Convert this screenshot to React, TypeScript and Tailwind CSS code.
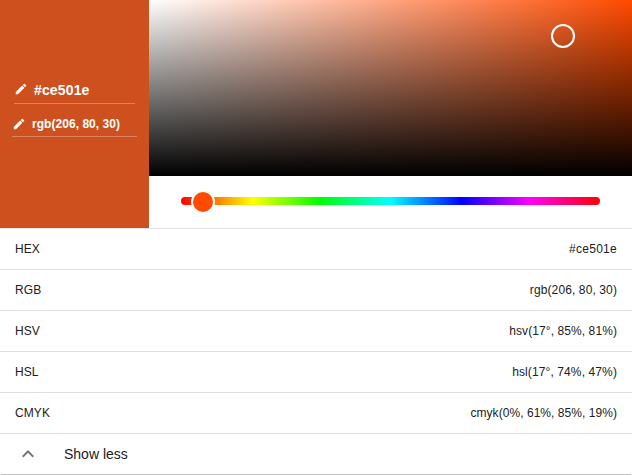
import { MdEdit, MdKeyboardArrowUp } from "react-icons/md";

const formats = [
  { name: "HEX", value: "#ce501e", tracking: "tracking-[0.28px]" },
  { name: "RGB", value: "rgb(206, 80, 30)", tracking: "tracking-[0.11px]" },
  { name: "HSV", value: "hsv(17°, 85%, 81%)", tracking: "tracking-[0.09px]" },
  { name: "HSL", value: "hsl(17°, 74%, 47%)", tracking: "tracking-[0.11px]" },
  { name: "CMYK", value: "cmyk(0%, 61%, 85%, 19%)", tracking: "tracking-[0.05px]" },
];

function Preview() {
  return (
    <div className="flex w-[149px] shrink-0 flex-col bg-[#ce501e] pt-[77px] font-bold text-white">
      <div className="ml-[14px] flex h-[27px] w-[121px] items-center border-b border-white/30">
        <MdEdit className="mb-[2px] size-[14px] shrink-0" />
        <span className="ml-[6px] text-[14px] leading-[16px] tracking-[0.15px]">#ce501e</span>
      </div>
      <div className="mt-[8px] ml-[12px] flex h-[25px] w-[125px] items-center border-b border-white/30">
        <MdEdit className="size-[14px] shrink-0" />
        <span className="ml-[6px] text-[12px] leading-[14px] tracking-[0.04px] whitespace-nowrap">rgb(206, 80, 30)</span>
      </div>
    </div>
  );
}

function Saturation() {
  return (
    <div className="relative h-[176px] bg-[#ff4a00] bg-[linear-gradient(to_top,#000,transparent),linear-gradient(to_right,#fff,rgba(255,255,255,0))]">
      <div className="absolute top-[24px] left-[402px] size-[24px] rounded-full border-2 border-white" />
    </div>
  );
}

function HueSlider() {
  return (
    <div className="px-8 pt-[21px]">
      <div className="relative h-2 rounded-full bg-[linear-gradient(to_right,#f00_0%,#ff0_17%,#0f0_33%,#0ff_50%,#00f_67%,#f0f_83%,#f00_100%)]">
        <div className="absolute top-[-7px] left-[10px] size-[24px] rounded-full border-2 border-white bg-[#ff4a00]" />
      </div>
    </div>
  );
}

export default function App() {
  return (
    <div className="h-[475px] w-[632px] overflow-hidden bg-white font-['Liberation_Sans',Arial,sans-serif] text-[#212121]">
      <div className="flex h-[475px] flex-col rounded-b-[2px] border-b border-[#c0c0c0]">
        <div className="flex h-[228px] shrink-0">
          <Preview />
          <div className="flex flex-1 flex-col">
            <Saturation />
            <HueSlider />
          </div>
        </div>
        {formats.map(({ name, value, tracking }) => (
          <div
            key={name}
            className="flex h-[41px] shrink-0 items-center justify-between border-t border-[#e0e0e0] px-[15px] text-[12px] leading-[16px]"
          >
            <span className="tracking-[0.1px]">{name}</span>
            <span className={tracking}>{value}</span>
          </div>
        ))}
        <div className="flex flex-1 items-center border-t border-[#e0e0e0]">
          <MdKeyboardArrowUp className="ml-[16px] size-6 text-[#757575]" />
          <span className="ml-6 text-[14px] leading-[16px]">Show less</span>
        </div>
      </div>
    </div>
  );
}
